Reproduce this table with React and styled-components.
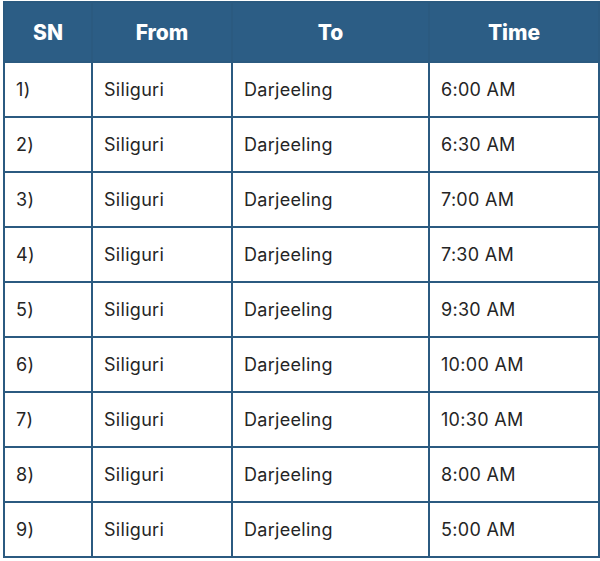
import React from "react";
import styled, { createGlobalStyle } from "styled-components";

const GlobalStyle = createGlobalStyle`
  body {
    margin: 0;
    background: #ffffff;
    font-family: Inter, "Liberation Sans", sans-serif;
  }
`;

const Wrapper = styled.div`
  padding: 1px 0 0 3px;
`;

const Table = styled.table`
  width: 597px;
  border-collapse: collapse;
  table-layout: fixed;
  border: 2px solid #2b5a80;
`;

const Head = styled.th`
  height: 58px;
  background-color: #2c5d85;
  color: #ffffff;
  font-size: 21px;
  font-weight: 800;
  text-align: center;
  padding: 0;
  border: 2px solid #2b5a80;
`;

const Cell = styled.td`
  height: 53px;
  padding: 0 0 0 11px;
  font-size: 18px;
  letter-spacing: 0.3px;
  color: #252525;
  border: 2px solid #2b5a80;
  vertical-align: middle;
`;

const rows = [
  "6:00 AM",
  "6:30 AM",
  "7:00 AM",
  "7:30 AM",
  "9:30 AM",
  "10:00 AM",
  "10:30 AM",
  "8:00 AM",
  "5:00 AM",
];

export default function App() {
  return (
    <Wrapper>
      <GlobalStyle />
      <Table>
        <colgroup>
          <col style={{ width: 88 }} />
          <col style={{ width: 140 }} />
          <col style={{ width: 197 }} />
          <col />
        </colgroup>
        <thead>
          <tr>
            <Head>SN</Head>
            <Head>From</Head>
            <Head>To</Head>
            <Head>Time</Head>
          </tr>
        </thead>
        <tbody>
          {rows.map((time, i) => (
            <tr key={i}>
              <Cell>{i + 1})</Cell>
              <Cell>Siliguri</Cell>
              <Cell>Darjeeling</Cell>
              <Cell>{time}</Cell>
            </tr>
          ))}
        </tbody>
      </Table>
    </Wrapper>
  );
}
